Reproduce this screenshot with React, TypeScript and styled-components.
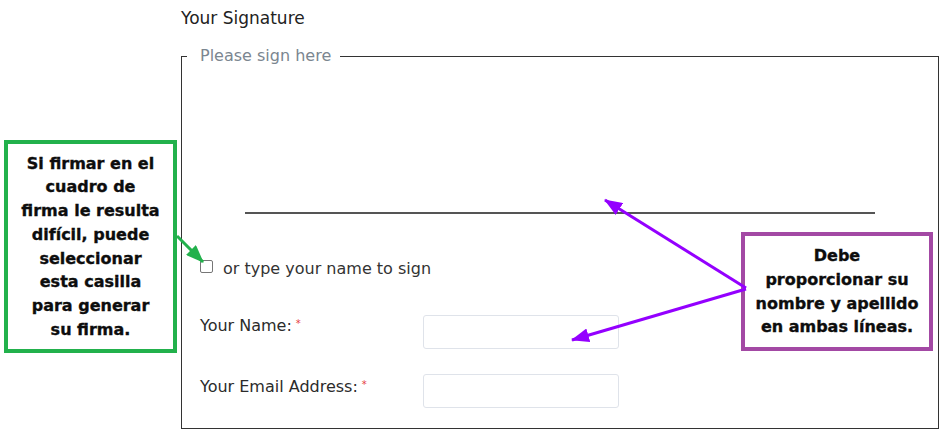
import React from 'react';
import styled, { createGlobalStyle } from 'styled-components';

const GlobalStyle = createGlobalStyle`
  html, body {
    margin: 0;
    padding: 0;
    background: #fff;
    overflow: hidden;
  }
  body {
    font-family: "DejaVu Sans", "Liberation Sans", sans-serif;
    color: #333;
  }
`;

const Page = styled.div`
  position: relative;
  width: 943px;
  height: 437px;
`;

const FormColumn = styled.div`
  padding: 8px 0 0 181px;
  width: 758px;
`;

const Heading = styled.div`
  font-size: 17px;
  color: #222;
`;

const SignBox = styled.fieldset`
  margin: 18px 0 0;
  padding: 0 0 20px;
  border: 1px solid #333;
  min-width: 0;
`;

const Legend = styled.legend`
  margin-left: 5px;
  padding: 0 9px 0 13px;
  font-size: 16px;
  line-height: 20px;
  color: #7b8690;
`;

const Pad = styled.div`
  height: 148px;
  display: flex;
  align-items: flex-end;
  justify-content: center;
`;

const SignLine = styled.div`
  width: 630px;
  border-bottom: 2px solid #555;
`;

const Inner = styled.div`
  padding: 0 18px;
`;

const CheckRow = styled.label`
  margin-top: 45px;
  display: flex;
  align-items: flex-start;
  gap: 10px;
  font-size: 16px;
  color: #333;
`;

const Box = styled.span`
  margin-top: 1px;
  width: 13px;
  height: 13px;
  box-sizing: border-box;
  border: 1px solid #767676;
  border-radius: 2px;
  background: #fff;
`;

const Fields = styled.div`
  margin-top: 37px;
  display: grid;
  grid-template-columns: 223px 196px;
  row-gap: 25px;
  align-items: start;
`;

const Label = styled.div<{ $drop?: number }>`
  font-size: 16px;
  color: #2b2b2b;
  padding-top: ${(p) => p.$drop ?? 0}px;
`;

const Req = styled.span`
  color: #e53e3e;
  font-size: 10px;
  vertical-align: top;
  margin-left: 4px;
  position: relative;
  top: 2px;
`;

const Input = styled.div`
  height: 34px;
  box-sizing: border-box;
  border: 1px solid #dfe3ea;
  border-radius: 3px;
  background: #fff;
`;

const Callout = styled.div<{ $color: string }>`
  position: absolute;
  box-sizing: border-box;
  border: 4px solid ${(p) => p.$color};
  background: #fff;
  display: flex;
  align-items: center;
  justify-content: center;
  text-align: center;
  font-family: "DejaVu Sans", "Liberation Sans", sans-serif;
  font-weight: bold;
  font-size: 16px;
  line-height: 23.7px;
  color: #0d0d0d;
  -webkit-text-stroke: 0.35px #0d0d0d;
`;

const Arrows = styled.svg`
  position: absolute;
  left: 0;
  top: 0;
  pointer-events: none;
`;

export default function App() {
  return (
    <Page>
      <GlobalStyle />
      <FormColumn>
        <Heading>Your Signature</Heading>
        <SignBox>
          <Legend>Please sign here</Legend>
          <Pad>
            <SignLine />
          </Pad>
          <Inner>
            <CheckRow>
              <Box />
              <span>or type your name to sign</span>
            </CheckRow>
            <Fields>
              <Label $drop={1}>
                Your Name:<Req>*</Req>
              </Label>
              <Input />
              <Label $drop={3}>
                Your Email Address:<Req>*</Req>
              </Label>
              <Input />
            </Fields>
          </Inner>
        </SignBox>
      </FormColumn>

      <Callout $color="#22b14c" style={{ left: 4, top: 140, width: 173, height: 213 }}>
        <div>
          Si firmar en el<br />cuadro de<br />firma le resulta<br />difícil, puede
          <br />seleccionar<br />esta casilla<br />para generar<br />su firma.
        </div>
      </Callout>
      <Callout $color="#a349a4" style={{ left: 741, top: 232, width: 192, height: 119 }}>
        <div>
          Debe<br />proporcionar su<br />nombre y apellido<br />en ambas líneas.
        </div>
      </Callout>

      <Arrows width="943" height="437" viewBox="0 0 943 437">
        <defs>
          <marker id="headG" markerUnits="userSpaceOnUse" markerWidth="18" markerHeight="14" refX="17" refY="7" orient="auto">
            <path d="M0 0 L18 7 L0 14 Z" fill="#22b14c" />
          </marker>
          <marker id="headP" markerUnits="userSpaceOnUse" markerWidth="18" markerHeight="14" refX="17" refY="7" orient="auto">
            <path d="M0 0 L18 7 L0 14 Z" fill="#9400ff" />
          </marker>
        </defs>
        <line x1="177" y1="236" x2="203" y2="262" stroke="#22b14c" strokeWidth="3" markerEnd="url(#headG)" />
        <line x1="746" y1="288" x2="605" y2="200" stroke="#9400ff" strokeWidth="3" markerEnd="url(#headP)" />
        <line x1="746" y1="289" x2="572" y2="340" stroke="#9400ff" strokeWidth="3" markerEnd="url(#headP)" />
      </Arrows>
    </Page>
  );
}
